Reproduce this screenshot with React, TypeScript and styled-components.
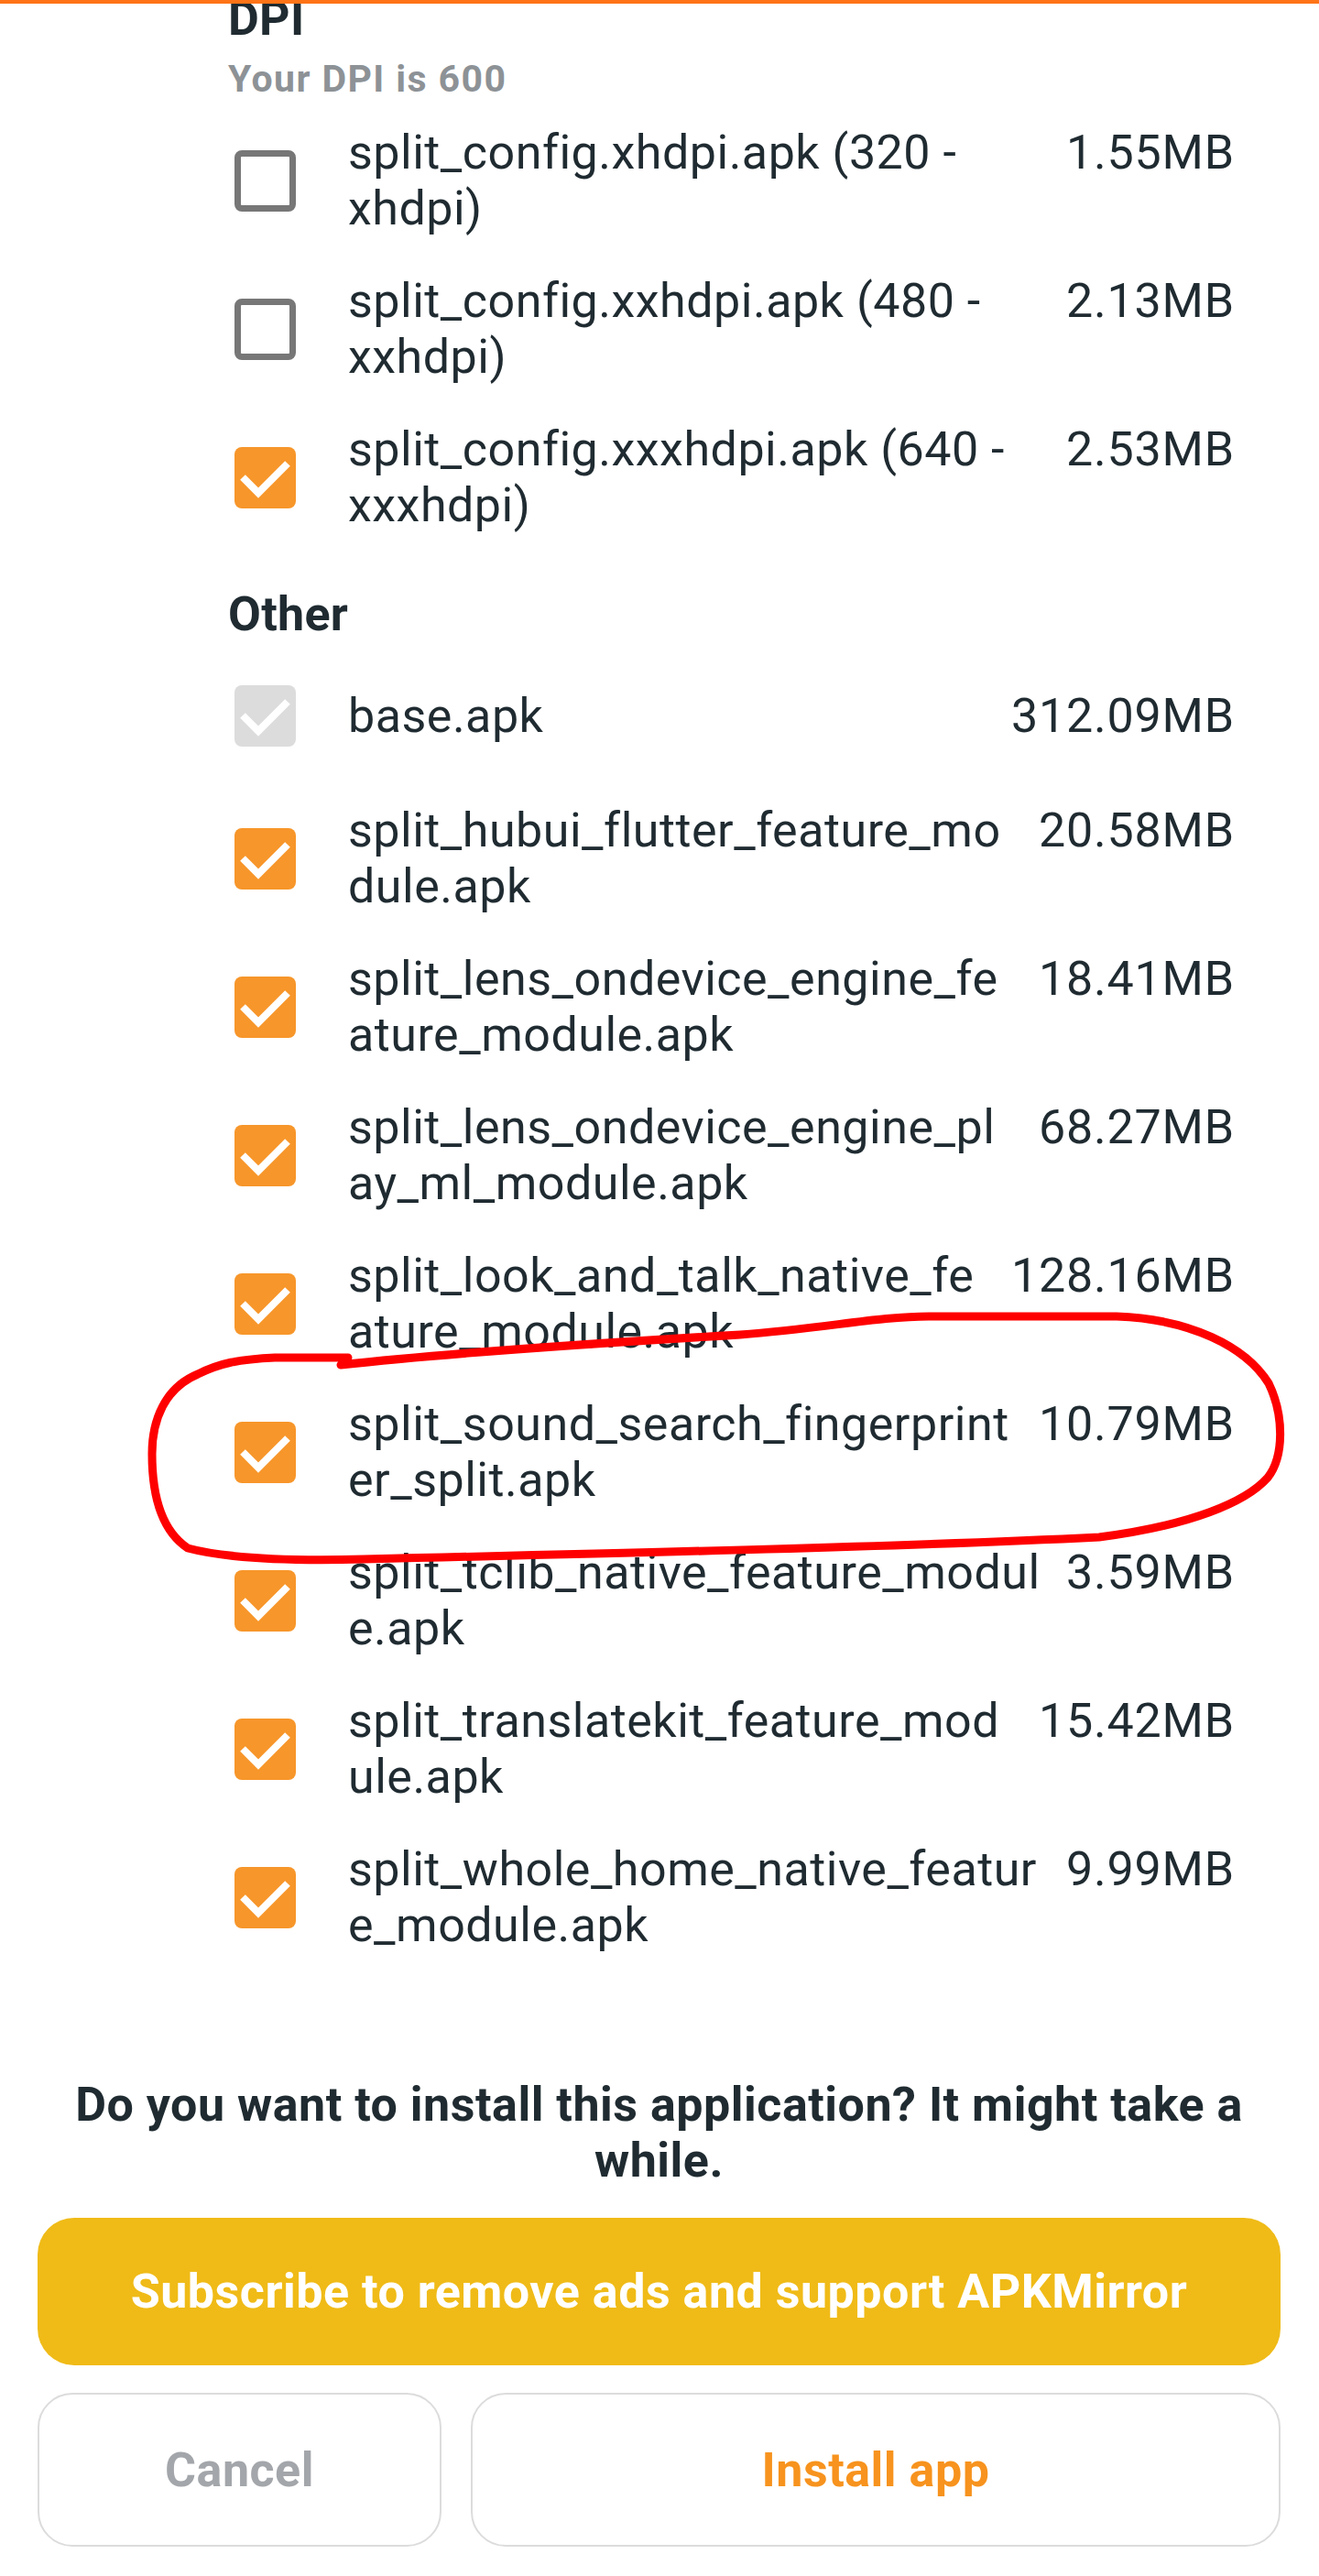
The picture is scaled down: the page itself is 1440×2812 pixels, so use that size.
import React from "react";
import styled, { createGlobalStyle } from "styled-components";

type CheckState = "on" | "off" | "locked";

interface SplitItem {
  name: string;
  size: string;
  state: CheckState;
}

const dpiItems: SplitItem[] = [
  { name: "split_config.xhdpi.apk (320 - xhdpi)", size: "1.55MB", state: "off" },
  { name: "split_config.xxhdpi.apk (480 - xxhdpi)", size: "2.13MB", state: "off" },
  { name: "split_config.xxxhdpi.apk (640 - xxxhdpi)", size: "2.53MB", state: "on" },
];

const otherItems: SplitItem[] = [
  { name: "base.apk", size: "312.09MB", state: "locked" },
  { name: "split_hubui_flutter_feature_module.apk", size: "20.58MB", state: "on" },
  { name: "split_lens_ondevice_engine_feature_module.apk", size: "18.41MB", state: "on" },
  { name: "split_lens_ondevice_engine_play_ml_module.apk", size: "68.27MB", state: "on" },
  { name: "split_look_and_talk_native_feature_module.apk", size: "128.16MB", state: "on" },
  { name: "split_sound_search_fingerprinter_split.apk", size: "10.79MB", state: "on" },
  { name: "split_tclib_native_feature_module.apk", size: "3.59MB", state: "on" },
  { name: "split_translatekit_feature_module.apk", size: "15.42MB", state: "on" },
  { name: "split_whole_home_native_feature_module.apk", size: "9.99MB", state: "on" },
];

const GlobalStyle = createGlobalStyle`
  html, body {
    margin: 0;
    padding: 0;
    background: #ffffff;
  }
  body {
    font-family: Roboto, "Liberation Sans", sans-serif;
    color: #1f2b31;
  }
`;

const Page = styled.div`
  position: relative;
  width: 1440px;
  height: 2812px;
  overflow: hidden;
  background: #ffffff;
`;

const TopBar = styled.div`
  position: absolute;
  top: 0;
  left: 0;
  right: 0;
  height: 4px;
  background: #ff7417;
  z-index: 2;
`;

const List = styled.div`
  margin-top: -10px;
  padding: 0 92px 0 249px;
`;

const SectionHead = styled.div<{ $spaced?: boolean }>`
  margin-top: ${(p) => (p.$spaced ? "38px" : "0")};
  padding-bottom: ${(p) => (p.$spaced ? "5px" : "7px")};
`;

const SectionTitle = styled.div`
  font-size: 52px;
  font-weight: 700;
  line-height: 61px;
  letter-spacing: 0.3px;
  color: #1f2b31;
`;

const SectionHint = styled.div`
  margin-top: 13px;
  font-size: 41px;
  font-weight: 700;
  line-height: 45px;
  letter-spacing: 1.4px;
  color: #8d9296;
`;

const Row = styled.div`
  display: grid;
  grid-template-columns: 67px minmax(0, 1fr);
  column-gap: 57px;
  align-items: center;
  min-height: 110px;
  padding: 20px 0 20px 7px;
`;

const Box = styled.div<{ $state: CheckState }>`
  width: 67px;
  height: 67px;
  box-sizing: border-box;
  border-radius: 8px;
  display: flex;
  align-items: center;
  justify-content: center;
  background: ${(p) =>
    p.$state === "on" ? "#f7962a" : p.$state === "locked" ? "#dcdcdc" : "#ffffff"};
  border: ${(p) => (p.$state === "off" ? "7px solid #777777" : "none")};
`;

const Body = styled.div`
  display: flex;
  align-items: flex-start;
`;

const Name = styled.div`
  flex: 1;
  min-width: 0;
  font-size: 52px;
  line-height: 61px;
  letter-spacing: 0.5px;
  overflow-wrap: anywhere;
`;

const Size = styled.div`
  margin-left: 24px;
  font-size: 52px;
  line-height: 61px;
  letter-spacing: 0.8px;
  white-space: nowrap;
  text-align: right;
`;

const Footer = styled.div`
  position: absolute;
  left: 41px;
  right: 42px;
  bottom: 32px;
  display: flex;
  flex-direction: column;
`;

const Question = styled.div`
  font-size: 52px;
  font-weight: 700;
  line-height: 61px;
  letter-spacing: 0.5px;
  text-align: center;
  padding: 0 10px;
`;

const Subscribe = styled.button`
  margin-top: 32px;
  height: 161px;
  border: none;
  border-radius: 40px;
  background: #f0bb17;
  color: #ffffff;
  font-family: Roboto, "Liberation Sans", sans-serif;
  font-size: 52px;
  font-weight: 700;
  letter-spacing: 0.5px;
`;

const Actions = styled.div`
  margin-top: 30px;
  display: grid;
  grid-template-columns: 441px 1fr;
  gap: 32px;
`;

const Action = styled.button<{ $primary?: boolean }>`
  height: 168px;
  border: 2px solid #dcdcdc;
  border-radius: 38px;
  background: #ffffff;
  color: ${(p) => (p.$primary ? "#f7931e" : "#a3a6aa")};
  font-family: Roboto, "Liberation Sans", sans-serif;
  font-size: 52px;
  font-weight: 700;
  letter-spacing: 0.5px;
`;

const Scribble = styled.svg`
  position: absolute;
  top: 0;
  left: 0;
  pointer-events: none;
  z-index: 3;
`;

const CheckBox = ({ state }: { state: CheckState }) => (
  <Box $state={state}>
    {state !== "off" && (
      <svg width="67" height="67" viewBox="0 0 67 67">
        <polyline points="9,33 26,50 58,18" fill="none" stroke="#ffffff" strokeWidth="8" />
      </svg>
    )}
  </Box>
);

const SplitRow = ({ item }: { item: SplitItem }) => (
  <Row>
    <CheckBox state={item.state} />
    <Body>
      <Name>{item.name}</Name>
      <Size>{item.size}</Size>
    </Body>
  </Row>
);

export default function App() {
  return (
    <Page>
      <GlobalStyle />
      <TopBar />
      <List>
        <SectionHead>
          <SectionTitle>DPI</SectionTitle>
          <SectionHint>Your DPI is 600</SectionHint>
        </SectionHead>
        {dpiItems.map((it) => (
          <SplitRow key={it.name} item={it} />
        ))}
        <SectionHead $spaced>
          <SectionTitle>Other</SectionTitle>
        </SectionHead>
        {otherItems.map((it) => (
          <SplitRow key={it.name} item={it} />
        ))}
      </List>

      <Footer>
        <Question>Do you want to install this application? It might take a while.</Question>
        <Subscribe>Subscribe to remove ads and support APKMirror</Subscribe>
        <Actions>
          <Action>Cancel</Action>
          <Action $primary>Install app</Action>
        </Actions>
      </Footer>

      {/* hand drawn red marker around the sound search split */}
      <Scribble width="1440" height="2812" viewBox="0 0 1440 2812">
        <path
          d="M 372 1490 C 480 1478, 620 1468, 808 1457 C 900 1450, 960 1437, 1014 1437 L 1219 1437 C 1300 1440, 1360 1470, 1385 1510 C 1402 1545, 1402 1590, 1384 1613 C 1360 1640, 1300 1665, 1200 1678 C 1000 1688, 700 1695, 397 1702 C 320 1704, 250 1702, 205 1690 C 175 1670, 166 1630, 166 1587 C 166 1550, 180 1515, 216 1500 C 240 1488, 260 1484, 300 1482 L 380 1482"
          fill="none"
          stroke="#ff0000"
          strokeWidth="9"
          strokeLinecap="round"
          strokeLinejoin="round"
        />
      </Scribble>
    </Page>
  );
}
